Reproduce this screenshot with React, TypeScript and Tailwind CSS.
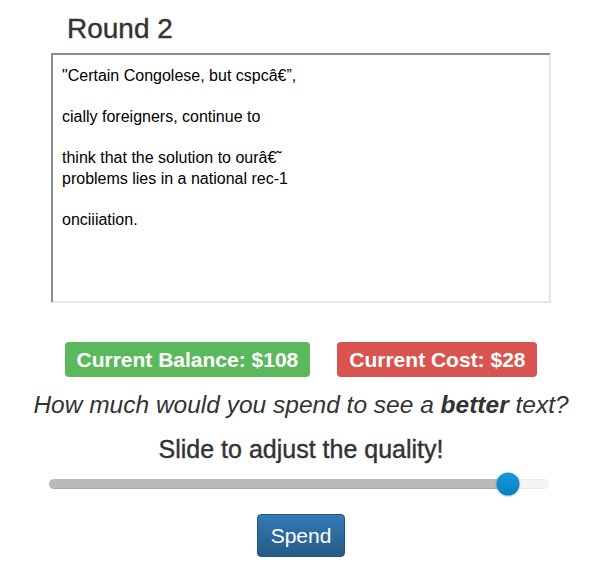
import { useState } from "react";

const passage =
  "\"Certain Congolese, but cspcâ€\u201d,\n\ncially foreigners, continue to\n\nthink that the solution to ourâ€\u02dc\nproblems lies in a national rec-1\n\nonciiiation.";

export default function App() {
  const [quality] = useState(92);

  return (
    <div className="w-[594px] h-[570px] bg-white pl-2 text-[#333] font-['Liberation_Sans',Arial,sans-serif]">
      {/* Round title + passage */}
      <div className="w-[500px] mx-auto pt-[13px]">
        <h3 className="pl-4 text-[28px] leading-[31px] font-normal [-webkit-text-stroke:0.4px_#333]">Round 2</h3>
        <textarea
          readOnly
          value={passage}
          className="mt-[9px] block w-[500px] h-[250px] resize-none border-2 border-t-[#8c8c8c] border-l-[#8c8c8c] border-r-[#e6e6e6] border-b-[#e6e6e6] pl-[9px] pt-[11px] text-[16px] leading-[20.6px] text-black outline-none"
        />
      </div>

      {/* Balance / cost */}
      <div className="mt-[39px] flex justify-center gap-[27px]">
        <span className="h-[35px] flex items-center px-3 rounded-[4px] bg-[#5cb85c] text-white text-[21px] font-bold">
          Current Balance: $108
        </span>
        <span className="h-[35px] flex items-center px-3 rounded-[4px] bg-[#d9534f] text-white text-[21px] font-bold">
          Current Cost: $28
        </span>
      </div>

      <p className="mt-[13px] text-center italic text-[24.5px] leading-[30px]">
        How much would you spend to see a <b>better</b> text?
      </p>

      <p className="mt-[14px] text-center text-[25px] leading-[30px] [-webkit-text-stroke:0.4px_#333]">
        Slide to adjust the quality!
      </p>

      {/* Quality slider */}
      <div className="mt-[9px] w-[500px] mx-auto -translate-x-[2px] h-[22px] flex items-center">
        <div className="relative w-full h-[10px] rounded-full bg-[#f5f5f5] border border-[#ececec]">
          <div
            className="absolute -left-px -top-px h-[10px] rounded-full bg-[#bababa] border-b border-[#a8a8a8]"
            style={{ width: `${quality}%` }}
          />
          <div
            className="absolute top-1/2 -translate-y-1/2 -translate-x-1/2 w-[23px] h-[23px] rounded-full bg-gradient-to-b from-[#149bdf] to-[#0480be] shadow-[0_1px_2px_rgba(0,0,0,0.25)]"
            style={{ left: `${quality}%` }}
          />
        </div>
      </div>

      <div className="mt-[19px] flex justify-center">
        <button className="h-[43px] px-[13px] rounded-[4px] border border-[#245580] bg-gradient-to-b from-[#337ab7] to-[#265a88] text-white text-[21px]">
          Spend
        </button>
      </div>
    </div>
  );
}
